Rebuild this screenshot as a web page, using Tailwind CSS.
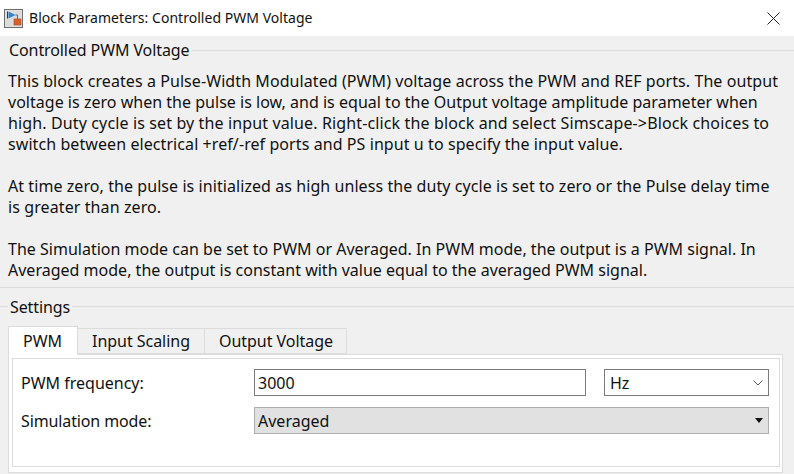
<!DOCTYPE html>
<html><head><meta charset="utf-8"><title>Block Parameters</title>
<script src="https://cdn.jsdelivr.net/npm/@tailwindcss/browser@4"></script></head>
<body class="m-0">
<div class="w-[794px] h-[474px] overflow-hidden bg-[#f0f0f0] font-['Noto_Sans','Open_Sans',sans-serif] text-[#111] flex flex-col">
  <div class="h-9 shrink-0 bg-white flex items-center pl-1 pr-[14px]">
    <svg class="w-5 h-5 shrink-0" viewBox="0 0 20 20"><rect x="0.5" y="1.5" width="18" height="18" fill="#e6e6e6" stroke="#6e6e6e"/><rect x="1.5" y="2.5" width="16" height="16" fill="#dcdcdc"/><path d="M3.5 3.5v7" stroke="#1d3f66" stroke-width="1" fill="none"/><path d="M4.5 3.5v7l7-3.5z" fill="#2f86d0"/><path d="M11.5 7h2v4" stroke="#5a6b78" fill="none"/><rect x="10" y="11" width="7" height="6" fill="#d9622b" stroke="#a04a20" stroke-width=".6"/></svg>
    <span class="ml-[5px] text-[14px] leading-5 tracking-[0.03px] whitespace-nowrap">Block Parameters: Controlled PWM Voltage</span>
    <svg class="ml-auto w-[13px] h-[13px]" viewBox="0 0 13 13"><path d="M.5.5l12 12M12.5.5l-12 12" stroke="#222" stroke-width="1" fill="none"/></svg>
  </div>
  <div class="h-[28px] shrink-0 flex items-center pl-[9px]">
    <span class="text-[16px] leading-6 tracking-[-0.1px] pr-[3px] whitespace-nowrap">Controlled PWM Voltage</span>
    <div class="flex-1 h-px bg-[#dcdcdc]"></div>
  </div>
  <div class="pl-[8px] pt-[7px] text-[16px] leading-[21px] whitespace-nowrap h-[224px] shrink-0 border-b border-[#dcdcdc]">
    <p class="tracking-[0.08px]">This block creates a Pulse-Width Modulated (PWM) voltage across the PWM and REF ports. The output</p>
    <p class="tracking-[0.02px]">voltage is zero when the pulse is low, and is equal to the Output voltage amplitude parameter when</p>
    <p class="tracking-[0.13px]">high. Duty cycle is set by the input value. Right-click the block and select Simscape-&gt;Block choices to</p>
    <p class="tracking-[0.08px]">switch between electrical +ref/-ref ports and PS input u to specify the input value.</p>
    <p class="mt-[21px] tracking-[0.07px]">At time zero, the pulse is initialized as high unless the duty cycle is set to zero or the Pulse delay time</p>
    <p class="tracking-[0.1px]">is greater than zero.</p>
    <p class="mt-[21px] tracking-[0.01px]">The Simulation mode can be set to PWM or Averaged. In PWM mode, the output is a PWM signal. In</p>
    <p class="tracking-[0.01px]">Averaged mode, the output is constant with value equal to the averaged PWM signal.</p>
  </div>
  <div class="h-[27px] mt-[5px] mb-[6px] shrink-0 flex items-center">
    <div class="w-[8px] h-px bg-[#dcdcdc]"></div>
    <span class="px-[2px] text-[16px] leading-6 tracking-[-0.1px]">Settings</span>
    <div class="flex-1 h-px bg-[#dcdcdc]"></div>
  </div>
  <div class="flex items-end h-[28px] shrink-0 pl-[8px] text-[16px] tracking-[-0.04px] relative z-10">
    <div class="w-[70px] h-[29px] -mb-px bg-white border border-b-0 border-[#dcdcdc] flex items-center justify-center pr-px">PWM</div>
    <div class="w-[127px] h-[26px] bg-[#f0f0f0] border border-l-0 border-[#dcdcdc] flex items-center justify-center">Input Scaling</div>
    <div class="w-[142px] h-[26px] bg-[#f0f0f0] border border-l-0 border-[#dcdcdc] flex items-center justify-center pl-px">Output Voltage</div>
  </div>
  <div class="ml-[8px] w-[775px] h-[119px] shrink-0 bg-white border border-[#dcdcdc] p-[3px]">
    <div class="w-[768px] h-[109px] border border-[#dcdcdc] pl-[8px] pt-[10px] text-[16px] tracking-[0px]">
      <div class="flex items-center h-[27px]">
        <span class="w-[233px]">PWM frequency:</span>
        <div class="w-[332px] h-[27px] border border-[#7a7a7a] flex items-center pl-[3px]">3000</div>
        <div class="ml-[18px] w-[165px] h-[27px] border border-[#7a7a7a] flex items-center pl-[5px]">Hz
          <svg class="ml-auto mr-[5px] w-[10px] h-[6px]" viewBox="0 0 10 6"><path d="M.5.5l4.5 4.5 4.5-4.5" stroke="#555" fill="none"/></svg>
        </div>
      </div>
      <div class="flex items-center h-[27px] mt-[11px]">
        <span class="w-[233px] tracking-[-0.12px]">Simulation mode:</span>
        <div class="w-[515px] h-[27px] bg-[#e1e1e1] border border-[#adadad] flex items-center pl-[3px]">Averaged
          <svg class="ml-auto mr-[5px] w-[8px] h-[5px]" viewBox="0 0 8 5"><path d="M0 0h8l-4 5z" fill="#111"/></svg>
        </div>
      </div>
    </div>
  </div>
</div>
</body></html>
